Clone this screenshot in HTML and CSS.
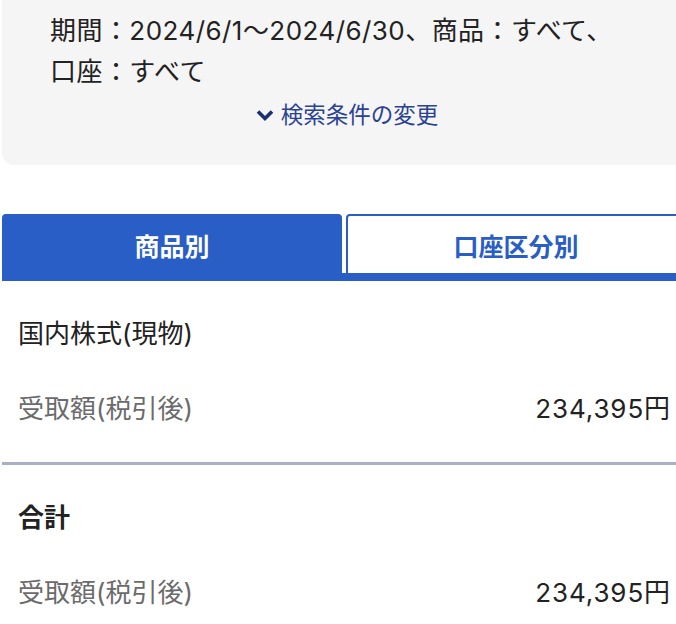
FILE: index.html
```html
<!DOCTYPE html>
<html lang="ja">
<head>
<meta charset="UTF-8" />
<meta name="viewport" content="width=device-width, initial-scale=1" />
<title>受取額</title>
<link rel="stylesheet" href="styles.css">
</head>
<body>

<div class="page">
  <!-- Search conditions -->
  <section class="conditions">
    <p class="conditions-text">期間：2024/6/1〜2024/6/30、商品：すべて、<br>口座：すべて</p>
    <a class="conditions-link" href="#">
      <svg class="chevron" width="18" height="14" viewBox="0 0 18 14" aria-hidden="true">
        <path d="M2 3.5 L9 10.5 L16 3.5" fill="none" stroke="currentColor" stroke-width="3.6" />
      </svg>
      検索条件の変更
    </a>
  </section>

  <!-- Tabs -->
  <div class="tabs">
    <button class="tab active">商品別</button>
    <button class="tab">口座区分別</button>
  </div>

  <!-- Rows -->
  <section class="group">
    <h3 class="group-title">国内株式(現物)</h3>
    <div class="row">
      <span class="row-label">受取額(税引後)</span>
      <span class="row-value">234,395円</span>
    </div>
  </section>

  <hr class="divider">

  <section class="group">
    <h3 class="group-title total">合計</h3>
    <div class="row">
      <span class="row-label">受取額(税引後)</span>
      <span class="row-value">234,395円</span>
    </div>
  </section>
</div>

</body>
</html>
```

FILE: styles.css
```css
body {
  margin: 0;
  font-family: Inter, "Noto Sans CJK JP", sans-serif;
  color: #222;
  background: #fff;
  overflow: hidden;
}
.page {
  width: 686px;
}
/* Search conditions */
.conditions {
  margin-left: 2px;
  background: #f5f5f5;
  border-radius: 0 0 0 12px;
  padding: 10px 0 35px 48px;
}
.conditions-text {
  margin: 0;
  font-size: 26px;
  line-height: 41px;
  letter-spacing: 0.45px;
  color: #222;
}
.conditions-link {
  display: flex; align-items: center; justify-content: center; gap: 7px;
  margin: 8px 0 0 -48px;
  padding-left: 6px;
  font-size: 22.5px;
  line-height: 30px;
  color: #2a4294;
  text-decoration: none;
}
.chevron { color: #1c2f6e; }
/* Tabs */
.tabs {
  margin: 49px 0 0 2px;
  display: flex; gap: 4px;
  border-bottom: 8px solid #285ec5;
}
.tab {
  width: 340px;
  height: 59px;
  padding: 0;
  font-family: inherit;
  font-size: 25px;
  font-weight: 700;
  color: #285ec5;
  background: #fff;
  border: 2px solid #285ec5;
  border-bottom: none;
  border-radius: 4px 4px 0 0;
}
.tab.active {
  color: #fff;
  background: #285ec5;
}
/* Groups */
.group {
  padding: 35px 16px 35px 18px;
}
.group-title {
  margin: 0;
  font-size: 26px;
  font-weight: 400;
  line-height: 36px;
}
.group-title.total { font-weight: 700; }
.row {
  margin-top: 39px;
  display: flex; justify-content: space-between;
  font-size: 26px;
  line-height: 36px;
}
.row-label { color: #6b6b6b; }
.row-value { color: #222; letter-spacing: 0.9px; margin-right: -1px; }
.divider {
  margin: 0 0 0 2px;
  border: none;
  height: 3px;
  background: #a9b0c3;
}
```
